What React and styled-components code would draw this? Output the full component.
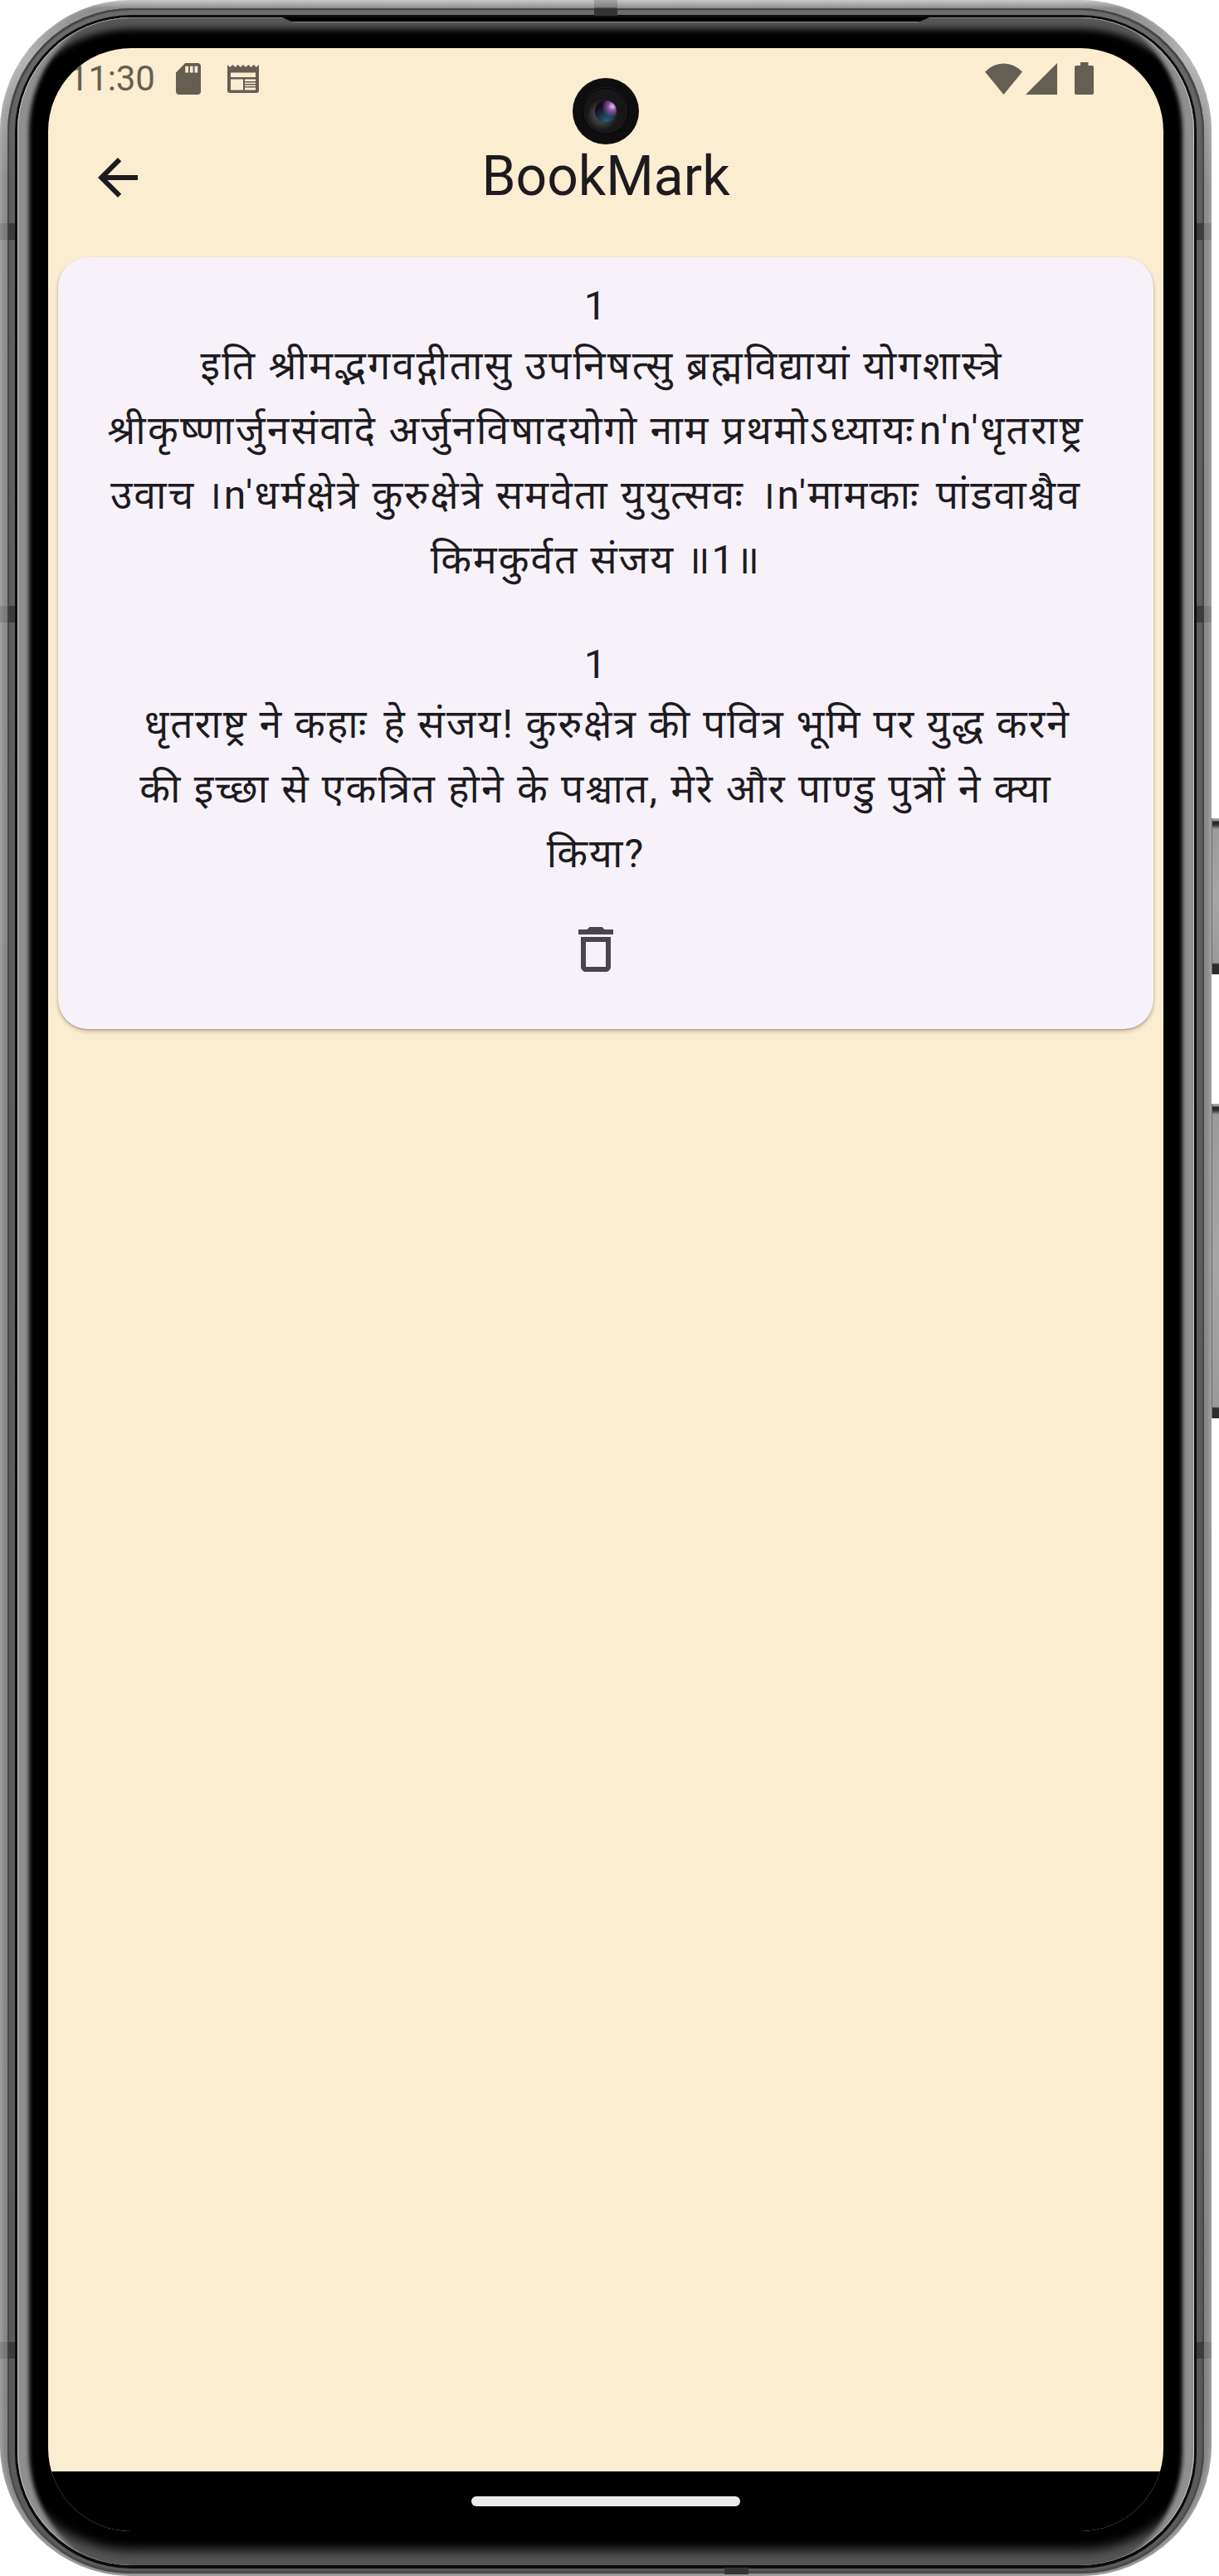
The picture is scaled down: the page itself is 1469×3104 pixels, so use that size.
import React from "react";
import styled, { createGlobalStyle } from "styled-components";

const GlobalStyle = createGlobalStyle`
  *, *::before, *::after { box-sizing: border-box; }
  body { margin: 0; background: #ffffff; overflow: hidden; }
`;

const Device = styled.div`
  position: relative;
  width: 1469px;
  height: 3104px;
  overflow: hidden;
  font-family: Roboto, "Noto Sans Devanagari", "Noto Sans", sans-serif;
  color: #1d1b20;
`;

const Shell = styled.div`
  width: 1460px;
  height: 3104px;
  padding: 10px 9px 3px;
  border-radius: 158px;
  background: linear-gradient(to bottom, #cccccc 0, #8c8c8c 10px, #b4b4b4 70px, #8a8a8a 220px, #848484 2900px, #8c8c8c 100%);
  box-shadow: inset 3px 0 4px rgba(190, 190, 190, 0.5), inset -3px 0 4px rgba(190, 190, 190, 0.5);
`;

const Rim = styled.div`
  height: 100%;
  padding: 8px 9px 6px;
  border-radius: 149px;
  background: linear-gradient(to bottom, #6c6c6c 0, #5f5f5f 200px, #5a5a5a 2950px, #5e5e5e 100%);
  box-shadow: inset 2px 2px 1px #464646, inset -2px 2px 1px #464646, inset 0 -3px 2px #484848;
`;

const Groove = styled.div`
  height: 100%;
  padding: 3px 3px 4px;
  border-radius: 140px;
  background: #0c0c0c;
`;

const Glass = styled.div`
  position: relative;
  height: 100%;
  padding: 37px 37px 41px;
  border-radius: 137px;
  background: #000000;
  box-shadow:
    inset 1px 0 0 #c4c4c4,
    inset -1px 0 0 #c4c4c4,
    inset 0 1px 0 #858585,
    inset 34px 0 5px -20px #8f8f8f,
    inset -34px 0 5px -20px #8f8f8f,
    inset 0 34px 8px -20px #575757,
    inset 0 -38px 14px -20px #555555;
`;

const Earpiece = styled.div`
  position: absolute;
  top: 0;
  left: 319px;
  right: 319px;
  height: 6px;
  background: linear-gradient(to bottom, #000000 4.5px, #8c8c8c 5px);
  clip-path: polygon(0 0, 100% 0, calc(100% - 14px) 100%, 14px 100%);
`;

const Antenna = styled.div`
  position: absolute;
  left: ${(p) => p.$x}px;
  top: ${(p) => p.$y}px;
  width: ${(p) => p.$w}px;
  height: ${(p) => p.$h}px;
  background: ${(p) => p.$fill};
`;

const SideButton = styled.div`
  position: absolute;
  left: 1460px;
  top: ${(p) => p.$top}px;
  width: 12px;
  height: ${(p) => p.$height}px;
  border-left: 1px solid #6c6c6c;
  background: linear-gradient(
    to bottom,
    #b0b0b0 0, #8a8a8a 3px, #222222 4px, #333333 8px, #9a9a9a 13px,
    #a6a6a6 50%, #9a9a9a calc(100% - 14px), #2c2c2c calc(100% - 12px), #2c2c2c 100%
  );
`;

const Screen = styled.div`
  position: relative;
  display: flex;
  flex-direction: column;
  width: 1344px;
  height: 2992px;
  overflow: hidden;
  border-radius: 100px;
  background: #fbedcf;
`;

const StatusBar = styled.div`
  display: flex;
  justify-content: space-between;
  align-items: center;
  height: 72px;
  padding: 0 84px 0 25px;
  color: #655e52;
`;

const StatusGroup = styled.div`
  display: flex;
  align-items: center;
  padding-top: 1px;
`;

const Clock = styled.span`
  width: 129px;
  font-size: 42px;
  line-height: 48px;
  letter-spacing: -0.2px;
  white-space: nowrap;
`;

const Glyph = styled.svg`
  display: block;
  flex: none;
  width: ${(p) => p.$w}px;
  height: ${(p) => p.$h}px;
  margin-left: ${(p) => p.$gap || 0}px;
  fill: currentColor;
`;

const AppBar = styled.header`
  display: grid;
  grid-template-columns: 168px 1fr 168px;
  align-items: center;
  height: 168px;
`;

const IconButton = styled.button`
  display: flex;
  justify-content: center;
  align-items: center;
  padding: 0;
  border: 0;
  background: none;
  color: ${(p) => p.$tone};
`;

const Title = styled.h1`
  margin: 0;
  padding-bottom: 3px;
  font-size: 66px;
  font-weight: 400;
  line-height: 84px;
  text-align: center;
`;

const Content = styled.main`
  flex: 1;
  padding: 12px;
`;

const Card = styled.article`
  height: 930px;
  padding: 26px 72px 60px 48px;
  border-radius: 36px;
  background: #f7f2fa;
  box-shadow: 0 3px 5px rgba(0, 0, 0, 0.2), 0 1px 2px rgba(0, 0, 0, 0.22);
`;

const Passage = styled.section`
  display: flex;
  flex-direction: column;
  align-items: center;
  margin-bottom: ${(p) => p.$after}px;
  font-size: 48px;
`;

const Number = styled.span`
  line-height: 66px;
  letter-spacing: 1.5px;
`;

const Line = styled.span`
  line-height: 78px;
  letter-spacing: ${(p) => p.$tracking}px;
  white-space: pre;
`;

const Segment = styled.span`
  &:not(:last-child) {
    margin-right: 5px;
  }
`;

const NavBar = styled.footer`
  display: flex;
  justify-content: center;
  height: 72px;
  padding-top: 30px;
  background: #000000;
`;

const HomePill = styled.div`
  width: 324px;
  height: 12px;
  border-radius: 6px;
  background: #ebebeb;
`;

const Camera = styled.div`
  position: absolute;
  left: 690px;
  top: 94px;
  display: flex;
  justify-content: center;
  align-items: center;
  width: 80px;
  height: 80px;
  border-radius: 50%;
  background: #0e0e0e;
`;

const CameraRing = styled.div`
  display: flex;
  justify-content: center;
  align-items: center;
  width: 56px;
  height: 56px;
  border: 1.5px solid #030303;
  border-radius: 50%;
  background: radial-gradient(circle at 42% 58%, #4a4a4a 0, #3c3c3c 24%, #181818 42%, #131313 100%);
  box-shadow: 0 -1px 1px #222222;
`;

const Lens = styled.div`
  width: 26px;
  height: 26px;
  border-radius: 50%;
  background:
    radial-gradient(circle at 80% 28%, #f0c4ff 0, rgba(170, 100, 190, 0.8) 18%, rgba(60, 20, 80, 0) 46%),
    radial-gradient(circle at 55% 95%, #22627c 0, #1b3c52 30%, rgba(20, 10, 30, 0) 65%),
    #150a1c;
`;

const verse = [
  { text: "\u00a0इति श्रीमद्भगवद्गीतासु उपनिषत्सु ब्रह्मविद्यायां योगशास्त्रे", tracking: 2.24 },
  { text: "श्रीकृष्णार्जुनसंवादे अर्जुनविषादयोगो नाम प्रथमोऽध्यायःn'n'धृतराष्ट्र", tracking: 2.2 },
  { text: "उवाच ।n'धर्मक्षेत्रे कुरुक्षेत्रे समवेता युयुत्सवः ।n'मामकाः पांडवाश्चैव", tracking: 2.17 },
  { text: "किमकुर्वत संजय ॥1॥", tracking: 1.95 },
];

const meaning = [
  { text: "\u00a0\u00a0धृतराष्ट्र ने कहाः हे संजय! कुरुक्षेत्र की पवित्र भूमि पर युद्ध करने", tracking: 1.96 },
  { text: "की इच्छा से एकत्रित होने के पश्चात, मेरे और पाण्डु पुत्रों ने क्या", tracking: 2.12 },
  { text: "किया?", tracking: 2.1 },
];

const sideMarks = [269, 730, 2822];

// The visarga carries a little extra room after it, so lines break into segments there.
function Verse({ number, lines, after }) {
  return (
    <Passage $after={after}>
      <Number>{number}</Number>
      {lines.map((line) => (
        <Line key={line.text} $tracking={line.tracking}>
          {line.text.split(/(?<=\u0903)/).map((part) => (
            <Segment key={part}>{part}</Segment>
          ))}
        </Line>
      ))}
    </Passage>
  );
}

export default function App() {
  return (
    <Device>
      <GlobalStyle />
      <Shell>
        <Rim>
          <Groove>
            <Glass>
              <Earpiece />
              <Screen>
                <StatusBar>
                  <StatusGroup>
                    <Clock>11:30</Clock>
                    <Glyph $w={30} $h={38} viewBox="4 2 16 20" preserveAspectRatio="none">
                      <path d="M18 2h-8L4 8v12c0 1.1.9 2 2 2h12c1.1 0 2-.9 2-2V4c0-1.1-.9-2-2-2zm-6 6h-2V4h2v4zm3 0h-2V4h2v4zm3 0h-2V4h2v4z" />
                    </Glyph>
                    <Glyph $w={38} $h={34} $gap={32} viewBox="0 0 38 34">
                      <path
                        fillRule="evenodd"
                        d="M0 0l3.2 3 3.2-3 3.1 3 3.2-3 3.2 3L19 0l3.2 3 3.1-3 3.2 3 3.2-3 3.1 3L38 0v31q0 3-3 3H3q-3 0-3-3zM4 9.500v5.500h30v-5.500zM4 17.500v13h15v-13zM21 17.500v2.500h13v-2.500zM21 21.500v1.500h13v-1.500zM21 24.500v1.500h13v-1.500zM21 27.500v3h13v-3z"
                      />
                    </Glyph>
                  </StatusGroup>
                  <StatusGroup>
                    <Glyph $w={45} $h={38} viewBox="0 0 45 38">
                      <path d="M0 10.500Q10 .5 22.500.5T45 10.500L22.500 38z" />
                    </Glyph>
                    <Glyph $w={38} $h={38} $gap={4} viewBox="0 0 38 38">
                      <path d="M38 0v38H0z" />
                    </Glyph>
                    <Glyph $w={23} $h={39} $gap={21} viewBox="0 0 23 39">
                      <path d="M7 0h9.500v4H21q2 0 2 2v31q0 2-2 2H2q-2 0-2-2V6q0-2 2-2h5z" />
                    </Glyph>
                  </StatusGroup>
                </StatusBar>
                <AppBar>
                  <IconButton $tone="#1d1b20" aria-label="Back">
                    <Glyph $w={72} $h={72} viewBox="0 0 24 24">
                      <path d="M20 11H7.830l5.590-5.590L12 4l-8 8 8 8 1.410-1.410L7.830 13H20v-2z" />
                    </Glyph>
                  </IconButton>
                  <Title>BookMark</Title>
                </AppBar>
                <Content>
                  <Card>
                    <Verse number="1" lines={verse} after={54} />
                    <Verse number="1" lines={meaning} after={40} />
                    <Passage $after={0}>
                      <IconButton $tone="#49454f" aria-label="Delete">
                        <Glyph $w={72} $h={72} viewBox="0 0 24 24">
                          <path
                            fillRule="evenodd"
                            d="M15.500 4l-1-1h-5l-1 1H5v2h14V4zM6 7v12c0 1.100.9 2 2 2h8c1.100 0 2-.9 2-2V7zM8 9h8v10H8z"
                          />
                        </Glyph>
                      </IconButton>
                    </Passage>
                  </Card>
                </Content>
                <NavBar>
                  <HomePill />
                </NavBar>
              </Screen>
            </Glass>
          </Groove>
        </Rim>
      </Shell>
      {sideMarks.map((y) => (
        <React.Fragment key={y}>
          <Antenna $x={0} $y={y} $w={18} $h={20} $fill="linear-gradient(to right, rgba(60,60,60,.2) 9px, #3c3c3c 10px)" />
          <Antenna $x={1442} $y={y} $w={18} $h={20} $fill="linear-gradient(to left, rgba(60,60,60,.2) 9px, #3c3c3c 10px)" />
        </React.Fragment>
      ))}
      <Antenna $x={716} $y={0} $w={28} $h={19} $fill="linear-gradient(to bottom, rgba(60,60,60,.25) 9px, #333333 10px)" />
      <Antenna $x={873} $y={3094} $w={29} $h={8} $fill="#363636" />
      <SideButton $top={986} $height={188} />
      <SideButton $top={1330} $height={379} />
      <Camera>
        <CameraRing>
          <Lens />
        </CameraRing>
      </Camera>
    </Device>
  );
}
